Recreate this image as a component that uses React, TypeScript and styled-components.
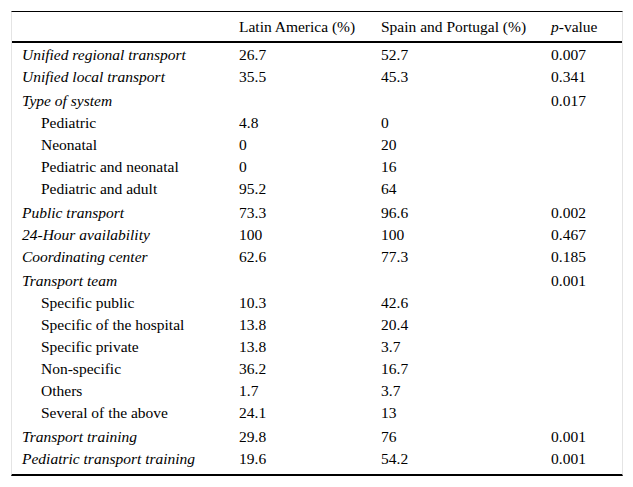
import styled, { createGlobalStyle } from "styled-components";

type Row = {
  label: string;
  latin?: string;
  iberia?: string;
  p?: string;
  sub?: boolean;
  gap?: boolean;
};

const rows: Row[] = [
  { label: "Unified regional transport", latin: "26.7", iberia: "52.7", p: "0.007" },
  { label: "Unified local transport", latin: "35.5", iberia: "45.3", p: "0.341" },
  { label: "Type of system", p: "0.017", gap: true },
  { label: "Pediatric", latin: "4.8", iberia: "0", sub: true },
  { label: "Neonatal", latin: "0", iberia: "20", sub: true },
  { label: "Pediatric and neonatal", latin: "0", iberia: "16", sub: true },
  { label: "Pediatric and adult", latin: "95.2", iberia: "64", sub: true },
  { label: "Public transport", latin: "73.3", iberia: "96.6", p: "0.002", gap: true },
  { label: "24-Hour availability", latin: "100", iberia: "100", p: "0.467" },
  { label: "Coordinating center", latin: "62.6", iberia: "77.3", p: "0.185" },
  { label: "Transport team", p: "0.001", gap: true },
  { label: "Specific public", latin: "10.3", iberia: "42.6", sub: true },
  { label: "Specific of the hospital", latin: "13.8", iberia: "20.4", sub: true },
  { label: "Specific private", latin: "13.8", iberia: "3.7", sub: true },
  { label: "Non-specific", latin: "36.2", iberia: "16.7", sub: true },
  { label: "Others", latin: "1.7", iberia: "3.7", sub: true },
  { label: "Several of the above", latin: "24.1", iberia: "13", sub: true },
  { label: "Transport training", latin: "29.8", iberia: "76", p: "0.001", gap: true },
  { label: "Pediatric transport training", latin: "19.6", iberia: "54.2", p: "0.001" },
];

function App() {
  return (
    <>
      <GlobalStyle />
      <Page>
        <Table>
          <HeadRow>
            <Cell />
            <Cell>Latin America (%)</Cell>
            <Cell>Spain and Portugal (%)</Cell>
            <Cell>
              <Ital>p</Ital>-value
            </Cell>
          </HeadRow>
          <Body>
            {rows.map((r) => (
              <BodyRow key={r.label} $gap={r.gap}>
                <Label $sub={r.sub}>{r.label}</Label>
                <Cell>{r.latin}</Cell>
                <Cell>{r.iberia}</Cell>
                <Cell>{r.p}</Cell>
              </BodyRow>
            ))}
          </Body>
        </Table>
      </Page>
    </>
  );
}

export default App;

const serif = `"Liberation Serif", "Times New Roman", serif`;

const GlobalStyle = createGlobalStyle`
  body {
    margin: 0;
    background: #ffffff;
    color: #000000;
    font-family: ${serif};
  }
`;

const Page = styled.div`
  padding: 11px 0 0 11px;
`;

const Table = styled.div`
  width: 610px;
  border-top: 1px solid #000000;
  border-bottom: 2px solid #000000;
  border-left: 1px solid #e4e4e4;
  border-right: 1px solid #e4e4e4;
`;

const cols = "217px 142px 170px 1fr";

const HeadRow = styled.div`
  display: grid;
  grid-template-columns: ${cols};
  align-items: center;
  height: 31px;
  box-sizing: border-box;
  border-bottom: 2px solid #000000;
`;

const Body = styled.div`
  display: flex;
  flex-direction: column;
  padding-top: 1px;
  padding-bottom: 4px;
`;

const BodyRow = styled.div<{ $gap?: boolean }>`
  display: grid;
  grid-template-columns: ${cols};
  align-items: center;
  height: 22px;
  margin-top: ${(p) => (p.$gap ? "2px" : "0")};
`;

const Cell = styled.div`
  padding-left: 10px;
  white-space: nowrap;
  font-family: ${serif};
  font-size: 15.5px;
  line-height: 22px;
  color: #000000;
`;

const Ital = styled.i`
  font-family: ${serif};
  font-style: italic;
`;

const Label = styled(Cell)<{ $sub?: boolean }>`
  font-style: ${(p) => (p.$sub ? "normal" : "italic")};
  padding-left: ${(p) => (p.$sub ? "29px" : "10px")};
`;
